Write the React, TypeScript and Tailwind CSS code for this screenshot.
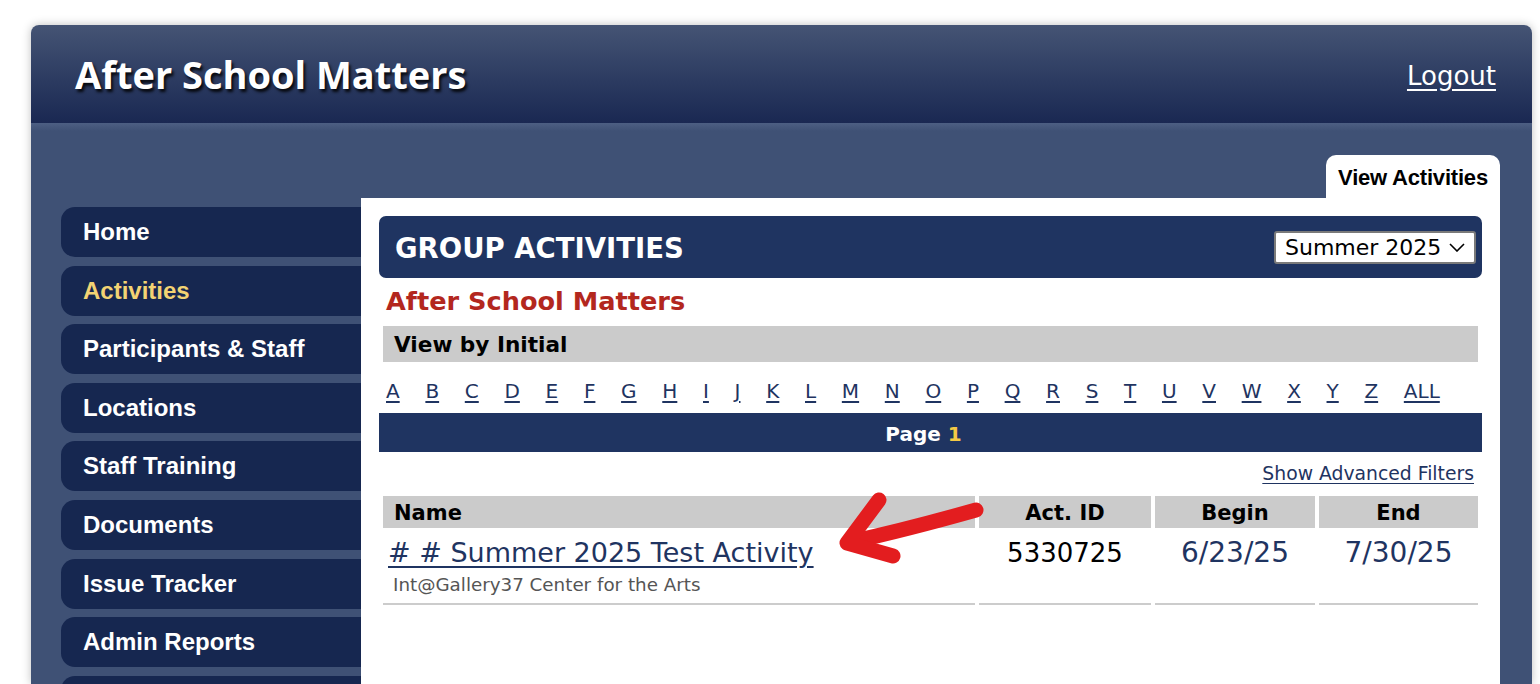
const navItems = [
  "Home",
  "Activities",
  "Participants & Staff",
  "Locations",
  "Staff Training",
  "Documents",
  "Issue Tracker",
  "Admin Reports",
  "",
];

const letters = "ABCDEFGHIJKLMNOPQRSTUVWXYZ".split("").concat("ALL");

const verdana = "font-['DejaVu_Sans',Verdana,sans-serif]";

export default function App() {
  return (
    <div className="relative h-[684px] w-full overflow-hidden bg-white">
      <div className="ml-[31px] mt-[25px] w-[1501px] overflow-hidden rounded-t-[8px] shadow-[0_0_10px_rgba(0,0,0,0.25)]">
        {/* top banner */}
        <div className="flex h-[98px] items-center justify-between bg-gradient-to-b from-[#455474] to-[#1a2852] pl-[44px] pr-[36px]">
          <h1 className="font-['Open_Sans',sans-serif] text-[38px] font-bold leading-none text-white [text-shadow:2px_3px_3px_rgba(0,0,0,0.85)]">
            After School Matters
          </h1>
          <a href="#" className={`${verdana} mt-[4px] text-[26px] text-white underline underline-offset-[4px]`}>
            Logout
          </a>
        </div>

        <div className="h-[561px] bg-[linear-gradient(#4d5f83,#3f5175_8px)] pl-[30px] pr-[32px] pt-[32px]">
          <div className="flex justify-end">
            <div className="flex h-[43px] w-[174px] items-center justify-center rounded-t-[10px] bg-white pt-[1px] font-['Liberation_Sans',Arial,sans-serif] text-[22px] font-bold tracking-[-0.2px] text-black">
              View Activities
            </div>
          </div>

          <div className="flex h-[600px]">
            <nav className="flex w-[300px] flex-col gap-[8.6px] pt-[9px]">
              {navItems.map((item, i) => (
                <a
                  key={i}
                  href="#"
                  className={`flex h-[50px] shrink-0 items-center rounded-l-[14px] bg-[#162750] pl-[22px] font-['Liberation_Sans',Arial,sans-serif] text-[24px] font-bold ${
                    item === "Activities" ? "text-[#f3d373]" : "text-white"
                  }`}
                >
                  {item}
                </a>
              ))}
            </nav>

            <main className="flex-1 bg-white px-[18px] pt-[18px]">
              <div className="flex h-[62px] items-center justify-between rounded-[7px] bg-[#1f3461] pl-[16px] pr-[6px]">
                <h2 className={`${verdana} pt-[4px] text-[27.5px] font-bold text-white`}>GROUP ACTIVITIES</h2>
                <div className="flex h-[33px] w-[202px] items-center justify-between rounded-[3px] border-2 border-[#7a7a7a] bg-white pl-[9px] pr-[9px]">
                  <span className={`${verdana} pt-[2px] text-[22px] leading-none text-black`}>Summer 2025</span>
                  <svg width="16" height="9" viewBox="0 0 16 9" fill="none">
                    <path d="M1 1 L8 8 L15 1" stroke="#000" strokeWidth="1.6" />
                  </svg>
                </div>
              </div>

              <div className={`${verdana} mt-[8px] pl-[7px] text-[25.6px] font-bold leading-[30px] text-[#b3271e]`}>
                After School Matters
              </div>

              <div className={`${verdana} mx-[4px] mt-[10px] flex h-[36px] items-center bg-[#cbcbcb] pl-[11px] pt-[3px] text-[21.6px] font-bold text-black`}>
                View by Initial
              </div>

              <div className={`${verdana} mt-[15px] flex h-[28px] items-center gap-[25.7px] pl-[7px] text-[20px] text-[#1f3461]`}>
                {letters.map((l) => (
                  <a key={l} href="#" className="underline underline-offset-[3px]">
                    {l}
                  </a>
                ))}
              </div>

              <div className={`${verdana} mt-[8px] flex h-[39px] items-center justify-center bg-[#1f3461] pr-[14px] pt-[2px] text-[20px] font-bold text-white`}>
                Page&nbsp;<span className="text-[#f4c945]">1</span>
              </div>

              <div className="mt-[8px] flex h-[24px] justify-end pr-[8px]">
                <a href="#" className={`${verdana} text-[18.8px] text-[#1f3461] underline underline-offset-[3px]`}>
                  Show Advanced Filters
                </a>
              </div>

              <div className={`${verdana} mx-[4px] mt-[12px] grid grid-cols-[592px_172px_160px_159px] gap-x-[4px]`}>
                <div className="flex h-[32px] items-center bg-[#cbcbcb] pl-[11px] pt-[3px] text-[21px] font-bold text-black">Name</div>
                <div className="flex h-[32px] items-center justify-center bg-[#cbcbcb] pt-[3px] text-[21px] font-bold text-black">Act. ID</div>
                <div className="flex h-[32px] items-center justify-center bg-[#cbcbcb] pt-[3px] text-[21px] font-bold text-black">Begin</div>
                <div className="flex h-[32px] items-center justify-center bg-[#cbcbcb] pt-[3px] text-[21px] font-bold text-black">End</div>

                <div className="border-b-2 border-[#cccccc] pb-[7px] pl-[5px] pt-[9px]">
                  <a href="#" className="block text-[27px] leading-[32px] text-[#1f3461] underline underline-offset-[4px]">
                    # # Summer 2025 Test Activity
                  </a>
                  <div className="pl-[5px] pt-[5px] text-[18.3px] leading-[22px] text-[#555555]">
                    Int@Gallery37 Center for the Arts
                  </div>
                </div>
                <div className="border-b-2 border-[#cccccc] pt-[9px] text-center text-[26px] leading-[32px] text-black">5330725</div>
                <div className="border-b-2 border-[#cccccc] pt-[9px] text-center text-[28px] leading-[32px] text-[#1f3461]">6/23/25</div>
                <div className="border-b-2 border-[#cccccc] pt-[9px] text-center text-[28px] leading-[32px] text-[#1f3461]">7/30/25</div>
              </div>
            </main>
          </div>
        </div>
      </div>

      {/* red annotation arrow */}
      <svg
        className="pointer-events-none absolute left-0 top-0"
        width="1540"
        height="684"
        viewBox="0 0 1540 684"
        fill="none"
      >
        <path
          d="M976 510 Q 905 530 850 542"
          stroke="#e31d1f"
          strokeWidth="15"
          strokeLinecap="round"
          strokeLinejoin="round"
        />
        <path
          d="M879 500 L 847 543 L 893 556"
          stroke="#e31d1f"
          strokeWidth="15"
          strokeLinecap="round"
          strokeLinejoin="round"
        />
      </svg>
    </div>
  );
}
